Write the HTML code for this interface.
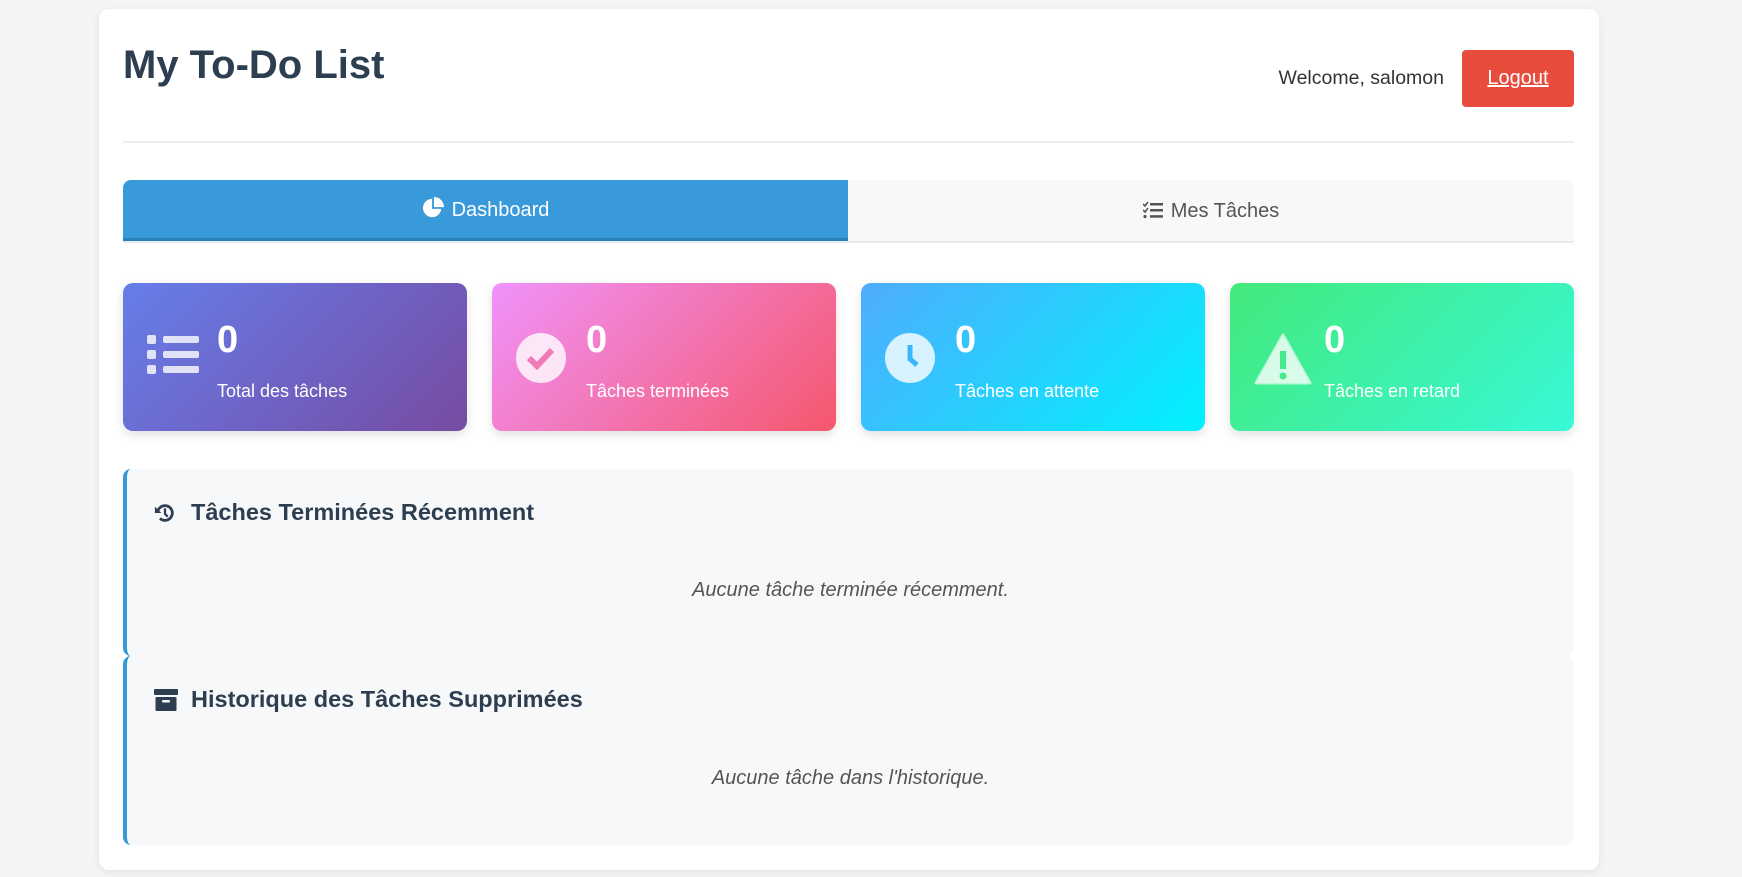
<!DOCTYPE html>
<html><head><meta charset="utf-8"><style>
*{box-sizing:border-box;margin:0;padding:0}
body{width:1742px;height:877px;background:#f4f4f4;font-family:"Liberation Sans",Arial,sans-serif;overflow:hidden;position:relative}
.c{position:absolute;left:99px;top:9px;width:1500px;height:861px;background:#fff;border-radius:10px;box-shadow:0 2px 8px rgba(0,0,0,.08)}
h1{position:absolute;left:24px;top:34px;font-size:40px;color:#2c3e50;font-weight:bold}
.wel{position:absolute;right:155px;top:58px;font-size:19.5px;color:#333}
.lo{position:absolute;left:1363px;top:41px;width:112px;height:57px;background:#e74c3c;border-radius:4px;color:#fff;font-size:20px;text-decoration:underline;text-align:center;line-height:57px}
.hr{position:absolute;left:24px;top:132px;width:1451px;height:2px;background:#eee}
.tabs{position:absolute;left:24px;top:171px;width:1451px;height:63px;background:#f7f8fa;border-radius:8px 8px 0 0;border-bottom:2px solid #e8eaed;overflow:hidden}
.t1{position:absolute;left:0;top:0;width:725px;height:61px;background:#3899db;border-bottom:3px solid #2a80b9;color:#fff;font-size:20px;text-align:center;line-height:60px}
.t2{position:absolute;left:725px;top:0;width:726px;height:61px;color:#555;font-size:20px;text-align:center;line-height:62px}
.card{position:absolute;top:274px;width:344px;height:148px;border-radius:10px;box-shadow:0 4px 10px rgba(0,0,0,.12);color:#fff}
.card svg{position:absolute;left:24px;top:50px}
.num{position:absolute;left:94px;top:36px;font-size:38px;font-weight:bold}
.lab{position:absolute;left:94px;top:98px;font-size:18px}
.sec{position:absolute;left:24px;width:1451px;background:#f7f8fa;border-left:4px solid #3498db;border-radius:8px}
.sec h3{position:absolute;left:64px;top:30px;font-size:23.5px;color:#2c3e50}
.sec svg{position:absolute;left:27px;top:33px}
.sec p{position:absolute;left:0;right:0;text-align:center;top:110px;font-size:20px;font-style:italic;color:#555}
</style></head><body>
<div class="c">
<h1>My To-Do List</h1>
<div class="wel">Welcome, salomon</div>
<div class="lo">Logout</div>
<div class="hr"></div>
<div class="tabs">
<div class="t1"><svg width="22" height="22" viewBox="0 0 24 24" style="vertical-align:-3px;margin-right:8px"><path d="M11 2a10 10 0 1 0 10 11H11z" fill="#fff"/><path d="M13 0v11h11A11 11 0 0 0 13 0z" fill="#fff"/></svg>Dashboard</div>
<div class="t2"><svg width="20" height="18" viewBox="0 0 20 18" style="vertical-align:-2px;margin-right:8px"><g fill="#555"><path d="M0 3l2 2 3-4" stroke="#555" stroke-width="1.6" fill="none"/><rect x="7" y="2" width="13" height="2.5"/><path d="M0 9l2 2 3-4" stroke="#555" stroke-width="1.6" fill="none"/><rect x="7" y="8" width="13" height="2.5"/><circle cx="2" cy="15.5" r="1.6"/><rect x="7" y="14.2" width="13" height="2.5"/></g></svg>Mes Tâches</div>
</div>
<div class="card" style="left:24px;background:linear-gradient(135deg,#667eea,#764ba2)"><svg width="52" height="44" viewBox="0 0 52 44"><g fill="#fff" opacity=".8"><rect x="0" y="2" width="9" height="9" rx="2"/><rect x="0" y="17" width="9" height="9" rx="2"/><rect x="0" y="32" width="9" height="9" rx="2"/><rect x="16" y="3" width="36" height="7" rx="2"/><rect x="16" y="18" width="36" height="7" rx="2"/><rect x="16" y="33" width="36" height="7" rx="2"/></g></svg><div class="num">0</div><div class="lab">Total des tâches</div></div>
<div class="card" style="left:393px;background:linear-gradient(135deg,#f093fb,#f5576c)"><svg width="50" height="50" viewBox="0 0 50 50"><circle cx="25" cy="25" r="25" fill="#fff" opacity=".8"/><path d="M13 25l8 8 15-16" stroke="#f07ab8" stroke-width="6" fill="none"/></svg><div class="num">0</div><div class="lab">Tâches terminées</div></div>
<div class="card" style="left:762px;background:linear-gradient(135deg,#4facfe,#00f2fe)"><svg width="50" height="50" viewBox="0 0 50 50"><circle cx="25" cy="25" r="25" fill="#fff" opacity=".8"/><path d="M25 12v14l7 6" stroke="#3bb6fe" stroke-width="5" fill="none"/></svg><div class="num">0</div><div class="lab">Tâches en attente</div></div>
<div class="card" style="left:1131px;background:linear-gradient(135deg,#43e97b,#38f9d7)"><svg width="58" height="52" viewBox="0 0 58 52"><path d="M29 2L56 50H2z" fill="#fff" opacity=".8" stroke="#fff" stroke-opacity=".8" stroke-width="3" stroke-linejoin="round"/><rect x="26" y="18" width="6" height="18" fill="#43e98c"/><circle cx="29" cy="43" r="3.5" fill="#43e98c"/></svg><div class="num">0</div><div class="lab">Tâches en retard</div></div>
<div class="sec" style="top:460px;height:187px"><svg width="22" height="22" viewBox="0 0 24 24"><path d="M4 12a8 8 0 1 1 2.5 5.8" stroke="#2c3e50" stroke-width="3" fill="none"/><path d="M1 5v7h7z" fill="#2c3e50"/><path d="M12 7v6l3 3" stroke="#2c3e50" stroke-width="2.5" fill="none"/></svg><h3>Tâches Terminées Récemment</h3><p>Aucune tâche terminée récemment.</p></div>
<div class="sec" style="top:647px;height:189px"><svg width="24" height="22" viewBox="0 0 24 22"><rect x="0" y="0" width="24" height="6" rx="1" fill="#2c3e50"/><rect x="1.5" y="8" width="21" height="14" rx="1" fill="#2c3e50"/><rect x="8" y="11" width="8" height="2.5" rx="1" fill="#f7f8fa"/></svg><h3>Historique des Tâches Supprimées</h3><p style="top:111px">Aucune tâche dans l'historique.</p></div>
</div>
</body></html>
